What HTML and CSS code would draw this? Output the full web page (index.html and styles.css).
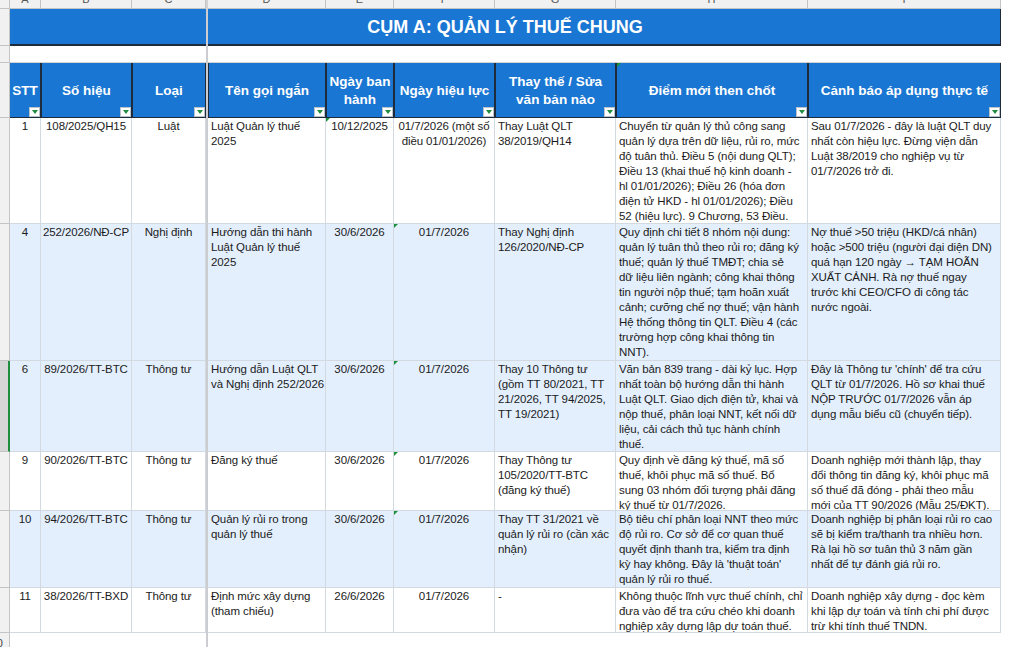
FILE: index.html
```html
<!DOCTYPE html>
<html lang="vi">
<head>
<meta charset="utf-8">
<title>Cụm A: Quản lý thuế chung</title>
<link rel="stylesheet" href="styles.css">
</head>
<body>
<div class="sheet">
  <div class="row letters">
    <div class="lt corner"></div>
    <div class="lt"><span>A</span></div>
    <div class="lt"><span>B</span></div>
    <div class="lt"><span>C</span></div>
    <div class="fz"></div>
    <div class="lt"><span>D</span></div>
    <div class="lt"><span>E</span></div>
    <div class="lt"><span>F</span></div>
    <div class="lt"><span>G</span></div>
    <div class="lt"><span>H</span></div>
    <div class="lt"><span>I</span></div>
    <div class="void"></div>
  </div>

  <div class="row title-row">
    <div class="rh"></div>
    <div class="band band-left"></div>
    <div class="fz"></div>
    <div class="band band-right">CỤM A: QUẢN LÝ THUẾ CHUNG</div>
    <div class="void"></div>
  </div>

  <div class="row blank-row">
    <div class="rh"></div>
    <div class="blank span3"></div>
    <div class="fz"></div>
    <div class="blank span6"></div>
    <div class="void"></div>
  </div>

  <div class="row head-row">
    <div class="rh"></div>
    <div class="hc first">STT<span class="flt"><svg width="6" height="4" viewBox="0 0 6 4"><polygon points="0,0 6,0 3,4"/></svg></span></div>
    <div class="hc">Số hiệu<span class="flt"><svg width="6" height="4" viewBox="0 0 6 4"><polygon points="0,0 6,0 3,4"/></svg></span></div>
    <div class="hc">Loại<span class="flt"><svg width="6" height="4" viewBox="0 0 6 4"><polygon points="0,0 6,0 3,4"/></svg></span></div>
    <div class="fz"></div>
    <div class="hc">Tên gọi ngắn<span class="flt"><svg width="6" height="4" viewBox="0 0 6 4"><polygon points="0,0 6,0 3,4"/></svg></span></div>
    <div class="hc">Ngày ban<br>hành<span class="flt"><svg width="6" height="4" viewBox="0 0 6 4"><polygon points="0,0 6,0 3,4"/></svg></span></div>
    <div class="hc">Ngày hiệu lực<span class="flt"><svg width="6" height="4" viewBox="0 0 6 4"><polygon points="0,0 6,0 3,4"/></svg></span></div>
    <div class="hc">Thay thế / Sửa<br>văn bản nào<span class="flt"><svg width="6" height="4" viewBox="0 0 6 4"><polygon points="0,0 6,0 3,4"/></svg></span></div>
    <div class="hc mark">Điểm mới then chốt<span class="flt"><svg width="6" height="4" viewBox="0 0 6 4"><polygon points="0,0 6,0 3,4"/></svg></span></div>
    <div class="hc last">Cảnh báo áp dụng thực tế<span class="flt"><svg width="6" height="4" viewBox="0 0 6 4"><polygon points="0,0 6,0 3,4"/></svg></span></div>
    <div class="void"></div>
  </div>

  <div class="row data h106">
    <div class="rh"></div>
    <div class="cell ctr">1</div>
    <div class="cell ctr">108/2025/QH15</div>
    <div class="cell ctr">Luật</div>
    <div class="fz"></div>
    <div class="cell">Luật Quản lý thuế<br>2025</div>
    <div class="cell ctr mark">10/12/2025</div>
    <div class="cell ctr">01/7/2026 (một số<br>điều 01/01/2026)</div>
    <div class="cell">Thay Luật QLT<br>38/2019/QH14</div>
    <div class="cell">Chuyển từ quản lý thủ công sang<br>quản lý dựa trên dữ liệu, rủi ro, mức<br>độ tuân thủ. Điều 5 (nội dung QLT);<br>Điều 13 (khai thuế hộ kinh doanh -<br>hl 01/01/2026); Điều 26 (hóa đơn<br>điện tử HKD - hl 01/01/2026); Điều<br>52 (hiệu lực). 9 Chương, 53 Điều.</div>
    <div class="cell">Sau 01/7/2026 - đây là luật QLT duy<br>nhất còn hiệu lực. Đừng viện dẫn<br>Luật 38/2019 cho nghiệp vụ từ<br>01/7/2026 trở đi.</div>
    <div class="void"></div>
  </div>

  <div class="row data alt h137">
    <div class="rh"></div>
    <div class="cell ctr">4</div>
    <div class="cell ctr">252/2026/NĐ-CP</div>
    <div class="cell ctr">Nghị định</div>
    <div class="fz"></div>
    <div class="cell">Hướng dẫn thi hành<br>Luật Quản lý thuế<br>2025</div>
    <div class="cell ctr">30/6/2026</div>
    <div class="cell ctr mark">01/7/2026</div>
    <div class="cell">Thay Nghị định<br>126/2020/NĐ-CP</div>
    <div class="cell">Quy định chi tiết 8 nhóm nội dung:<br>quản lý tuân thủ theo rủi ro; đăng ký<br>thuế; quản lý thuế TMĐT; chia sẻ<br>dữ liệu liên ngành; công khai thông<br>tin người nộp thuế; tạm hoãn xuất<br>cảnh; cưỡng chế nợ thuế; vận hành<br>Hệ thống thông tin QLT. Điều 4 (các<br>trường hợp công khai thông tin<br>NNT).</div>
    <div class="cell">Nợ thuế &gt;50 triệu (HKD/cá nhân)<br>hoặc &gt;500 triệu (người đại diện DN)<br>quá hạn 120 ngày → TẠM HOÃN<br>XUẤT CẢNH. Rà nợ thuế ngay<br>trước khi CEO/CFO đi công tác<br>nước ngoài.</div>
    <div class="void"></div>
  </div>

  <div class="row data alt h91">
    <div class="rh sel"></div>
    <div class="cell ctr">6</div>
    <div class="cell ctr">89/2026/TT-BTC</div>
    <div class="cell ctr">Thông tư</div>
    <div class="fz"></div>
    <div class="cell">Hướng dẫn Luật QLT<br>và Nghị định 252/2026</div>
    <div class="cell ctr">30/6/2026</div>
    <div class="cell ctr mark">01/7/2026</div>
    <div class="cell">Thay 10 Thông tư<br>(gồm TT 80/2021, TT<br>21/2026, TT 94/2025,<br>TT 19/2021)</div>
    <div class="cell">Văn bản 839 trang - dài kỷ lục. Hợp<br>nhất toàn bộ hướng dẫn thi hành<br>Luật QLT. Giao dịch điện tử, khai và<br>nộp thuế, phân loại NNT, kết nối dữ<br>liệu, cải cách thủ tục hành chính<br>thuế.</div>
    <div class="cell">Đây là Thông tư 'chính' để tra cứu<br>QLT từ 01/7/2026. Hồ sơ khai thuế<br>NỘP TRƯỚC 01/7/2026 vẫn áp<br>dụng mẫu biểu cũ (chuyển tiếp).</div>
    <div class="void"></div>
  </div>

  <div class="row data h59">
    <div class="rh"></div>
    <div class="cell ctr">9</div>
    <div class="cell ctr">90/2026/TT-BTC</div>
    <div class="cell ctr">Thông tư</div>
    <div class="fz"></div>
    <div class="cell">Đăng ký thuế</div>
    <div class="cell ctr">30/6/2026</div>
    <div class="cell ctr mark">01/7/2026</div>
    <div class="cell">Thay Thông tư<br>105/2020/TT-BTC<br>(đăng ký thuế)</div>
    <div class="cell">Quy định về đăng ký thuế, mã số<br>thuế, khôi phục mã số thuế. Bổ<br>sung 03 nhóm đối tượng phải đăng<br>ký thuế từ 01/7/2026.</div>
    <div class="cell">Doanh nghiệp mới thành lập, thay<br>đổi thông tin đăng ký, khôi phục mã<br>số thuế đã đóng - phải theo mẫu<br>mới của TT 90/2026 (Mẫu 25/ĐKT).</div>
    <div class="void"></div>
  </div>

  <div class="row data alt h77">
    <div class="rh"></div>
    <div class="cell ctr">10</div>
    <div class="cell ctr">94/2026/TT-BTC</div>
    <div class="cell ctr">Thông tư</div>
    <div class="fz"></div>
    <div class="cell">Quản lý rủi ro trong<br>quản lý thuế</div>
    <div class="cell ctr">30/6/2026</div>
    <div class="cell ctr mark">01/7/2026</div>
    <div class="cell">Thay TT 31/2021 về<br>quản lý rủi ro (cần xác<br>nhận)</div>
    <div class="cell">Bộ tiêu chí phân loại NNT theo mức<br>độ rủi ro. Cơ sở để cơ quan thuế<br>quyết định thanh tra, kiểm tra định<br>kỳ hay không. Đây là 'thuật toán'<br>quản lý rủi ro thuế.</div>
    <div class="cell">Doanh nghiệp bị phân loại rủi ro cao<br>sẽ bị kiểm tra/thanh tra nhiều hơn.<br>Rà lại hồ sơ tuân thủ 3 năm gần<br>nhất để tự đánh giá rủi ro.</div>
    <div class="void"></div>
  </div>

  <div class="row data h45">
    <div class="rh"></div>
    <div class="cell ctr">11</div>
    <div class="cell ctr">38/2026/TT-BXD</div>
    <div class="cell ctr">Thông tư</div>
    <div class="fz"></div>
    <div class="cell">Định mức xây dựng<br>(tham chiếu)</div>
    <div class="cell ctr">26/6/2026</div>
    <div class="cell ctr">01/7/2026</div>
    <div class="cell">-</div>
    <div class="cell">Không thuộc lĩnh vực thuế chính, chỉ<br>đưa vào để tra cứu chéo khi doanh<br>nghiệp xây dựng lập dự toán thuế.</div>
    <div class="cell">Doanh nghiệp xây dựng - đọc kèm<br>khi lập dự toán và tính chi phí được<br>trừ khi tính thuế TNDN.</div>
    <div class="void"></div>
  </div>

  <div class="row empty-row">
    <div class="rh num"><span>10</span></div>
    <div class="blank span3"></div>
    <div class="fz"></div>
    <div class="blank span6"></div>
    <div class="void"></div>
  </div>
</div>
</body>
</html>
```

FILE: styles.css
```css
* {
  box-sizing: border-box;
  margin: 0;
  padding: 0;
}

html, body {
  background: #ffffff;
}

body {
  width: 1024px;
  height: 647px;
  overflow: hidden;
  font-family: "Liberation Sans", Arial, sans-serif;
  color: #1b1b1b;
}

.sheet {
  width: 1024px;
}

.row {
  display: grid;
  grid-template-columns: 10px 31px 91px 74px 2px 118px 68px 101px 121px 192px 193px 1fr;
}

.void {
  background: #ffffff;
}

.fz {
  background: #cbcdd0;
}

/* column letters */
.letters {
  height: 9px;
}

.lt {
  background: #f1f1f1;
  border-right: 1px solid #c4c4c4;
  border-bottom: 1px solid #c4c4c4;
  overflow: hidden;
  text-align: center;
  color: #555555;
  font-size: 11px;
}

.lt span {
  display: block;
  line-height: 11px;
  margin-top: -6px;
}

.letters .fz {
  background: #d3d3d3;
}

/* row header column */
.rh {
  background: #f1f1f1;
  border-right: 1px solid #c4c4c4;
  border-bottom: 1px solid #c4c4c4;
  overflow: hidden;
}

.rh.sel {
  background: #d6d6d6;
  border-right: 2px solid #1e8e3e;
}

.rh.num {
  display: flex;
  justify-content: flex-end;
  align-items: center;
  padding-right: 6px;
  font-size: 11px;
  color: #444444;
}

/* title band */
.title-row {
  height: 37px;
}

.band {
  background: #1976d2;
  border-bottom: 2px solid #1d2b3a;
}

.band-left {
  grid-column: span 3;
}

.band-right {
  grid-column: span 6;
  border-right: 1px solid #1d2b3a;
  color: #ffffff;
  font-weight: bold;
  font-size: 18px;
  display: flex;
  align-items: center;
  justify-content: center;
  padding-right: 198px;
  padding-top: 1px;
  white-space: nowrap;
}

/* blank spacer row */
.blank-row {
  height: 17px;
}

.blank {
  background: #ffffff;
  border-bottom: 1px solid #d4d4d4;
}

.span3 {
  grid-column: span 3;
}

.span6 {
  grid-column: span 6;
}

/* header row */
.head-row {
  height: 55px;
}

.hc {
  position: relative;
  background: #1976d2;
  color: #ffffff;
  font-weight: bold;
  font-size: 13.5px;
  line-height: 18px;
  text-align: center;
  display: flex;
  align-items: center;
  justify-content: center;
  padding-top: 2px;
  border-left: 1px solid #1d2b3a;
  border-right: 1px solid #1d2b3a;
  border-bottom: 1px solid #1d2b3a;
  white-space: nowrap;
}

.hc.first {
  border-left: none;
}

.flt {
  position: absolute;
  right: 0;
  bottom: 0;
  width: 11px;
  height: 10px;
  background: #ffffff;
  border: 1px solid #b9c3cc;
  display: flex;
  align-items: center;
  justify-content: center;
}

.flt svg {
  display: block;
  fill: #1e8e3e;
}

/* data rows */
.cell {
  position: relative;
  background: #ffffff;
  border-right: 1px solid #d3d9e1;
  border-bottom: 1px solid #d3d9e1;
  padding: 1px 1px 0 3px;
  font-size: 11.5px;
  line-height: 15px;
  letter-spacing: -0.1px;
  white-space: nowrap;
  overflow: hidden;
}

.alt .cell {
  background: #e3effd;
}

.ctr {
  text-align: center;
  padding-left: 1px;
}

.mark::before {
  content: "";
  position: absolute;
  top: 0;
  left: 0;
  border-top: 4px solid #1a8f3c;
  border-right: 4px solid transparent;
}

.h106 { height: 106px; }
.h137 { height: 137px; }
.h91 { height: 91px; }
.h59 { height: 59px; }
.h77 { height: 77px; }
.h45 { height: 45px; }

.empty-row {
  height: 21px;
}

.empty-row .blank {
  border-bottom: none;
}
```
